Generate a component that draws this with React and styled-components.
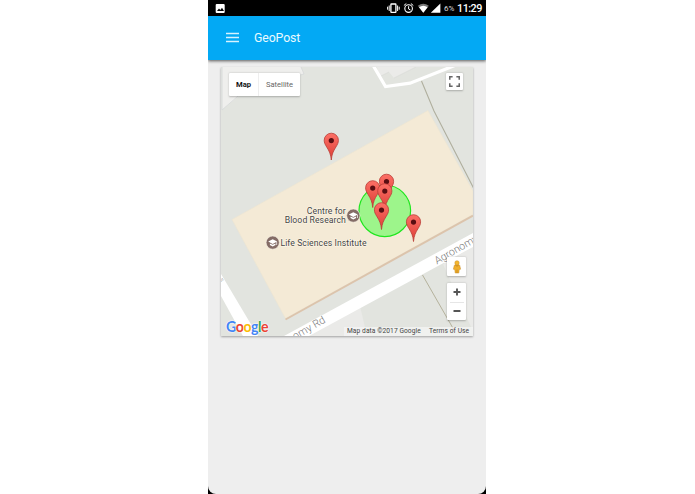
import React from 'react';
import styled, { createGlobalStyle } from 'styled-components';

const Global = createGlobalStyle`
  * { box-sizing: border-box; }
  body { margin: 0; background: #fff; font-family: Roboto, sans-serif; }
`;

const Page = styled.main`
  width: 695px;
  height: 494px;
  padding-left: 208px;
  overflow: hidden;
`;

const Phone = styled.div`
  width: 278px;
  height: 494px;
  background: #000;
`;

const Screen = styled.div`
  height: 478px;
  background: #eee;
  border-radius: 0 0 8px 8px;
  overflow: hidden;
`;

const StatusBar = styled.div`
  height: 16px;
  display: flex;
  align-items: center;
  justify-content: space-between;
  padding: 0 5px 0 7px;
  color: #fff;
`;

const StatusIcons = styled.div`
  display: flex;
  align-items: center;
`;

const Battery = styled.span`
  font-size: 8px;
  line-height: 16px;
  margin-top: 1px;
  color: #ddd;
  width: 11px;
  white-space: nowrap;
`;

const Clock = styled.span`
  font-size: 10.8px;
  font-weight: 500;
  line-height: 16px;
  margin: 2px 0 0 2px;
  width: 24px;
  letter-spacing: -0.5px;
  white-space: nowrap;
`;

const AppBar = styled.header`
  position: relative;
  height: 44px;
  display: flex;
  align-items: center;
  padding: 0 18px 2px;
  gap: 15px;
  background: #03a9f4;
  box-shadow: 0 1px 3px rgba(0, 0, 0, 0.65);
`;

const Title = styled.h1`
  margin: 1px 0 0;
  font-size: 12.3px;
  font-weight: 400;
  letter-spacing: -0.1px;
  line-height: 18px;
  color: #eafaff;
`;

const MapCard = styled.section`
  position: relative;
  width: 252px;
  height: 269px;
  margin: 7px 0 0 13px;
  background: #e2e4df;
  box-shadow: 0 1px 2px rgba(0, 0, 0, 0.32);
`;

const Drawing = styled.svg`
  display: block;
  width: 252px;
  height: 269px;
`;

const Control = styled.div`
  position: absolute;
  display: flex;
  background: #fff;
  border-radius: 1px;
  box-shadow: 0 0.5px 2px rgba(0, 0, 0, 0.25);
`;

const MapTypes = styled(Control)`
  left: 8px;
  top: 6px;
  width: 71px;
  height: 23px;
`;

const TypeButton = styled.button`
  width: ${(p) => p.$width}px;
  height: 23px;
  padding: 0;
  border: 0;
  border-left: ${(p) => (p.$active ? '0' : '1px solid #eee')};
  background: none;
  font: ${(p) => (p.$active ? 700 : 400)} 7.6px Roboto, sans-serif;
  color: ${(p) => (p.$active ? '#111' : '#666')};
`;

const Fullscreen = styled(Control)`
  right: 10px;
  top: 6px;
  width: 17px;
  height: 17px;
  align-items: center;
  justify-content: center;
`;

const StreetView = styled(Control)`
  right: 7px;
  top: 190px;
  width: 19px;
  height: 19px;
  align-items: center;
  justify-content: center;
`;

const Zoom = styled(Control)`
  right: 7px;
  top: 216px;
  width: 19px;
  height: 37px;
  flex-direction: column;
  align-items: center;
`;

const ZoomButton = styled.button`
  width: 14px;
  height: 18.5px;
  padding: 0;
  display: flex;
  align-items: center;
  justify-content: center;
  border: 0;
  border-top: ${(p) => (p.$divided ? '1px solid #e6e6e6' : '0')};
  background: none;
`;

const Credits = styled.div`
  position: absolute;
  right: 0;
  bottom: 0;
  height: 9px;
  display: flex;
  background: rgba(245, 245, 245, 0.72);
  font-size: 6.65px;
  line-height: 8px;
  color: #444;
  white-space: nowrap;
`;

const Credit = styled.span`
  width: ${(p) => p.$width}px;
  padding-left: 3px;
  letter-spacing: 0.07px;
`;

const Logo = styled.div`
  position: absolute;
  left: 5px;
  bottom: 0;
  font-family: Lato, sans-serif;
  font-size: 14.2px;
  font-weight: 700;
  line-height: 18px;
  letter-spacing: -0.5px;
  text-shadow: 0 0 1px #fff, 0 0 1px #fff, 0 0 2px #fff;
`;

const Letter = styled.span`
  color: ${(p) => p.$color};
`;

const markers = [
  [386.5, 201], [372.7, 207.5], [384.8, 210.5], [381.5, 229.5], [413.5, 241.5], [331.3, 160],
];

const logoLetters = [
  ['G', '#4285f4'], ['o', '#ea4335'], ['o', '#fbbc05'],
  ['g', '#4285f4'], ['l', '#34a853'], ['e', '#ea4335'],
];

function Marker({ x, y }) {
  return (
    <g transform={`translate(${x} ${y})`}>
      <path
        d="M0 0C-.5-5.8-2-8.8-4.6-13C-6.3-15.7-7.1-17.4-7.1-19.7A7.1 7.1 0 0 1 7.1-19.7C7.1-17.4 6.3-15.7 4.6-13C2-8.8.5-5.8 0 0Z"
        fill="url(#pin)" stroke="#b93c36" strokeWidth=".8"
      />
      <circle cy="-19.4" r="2.6" fill="#590e12" />
    </g>
  );
}

function School({ x, y }) {
  return (
    <g transform={`translate(${x} ${y})`}>
      <circle r="6.6" fill="#846c66" stroke="#f9f3e8" strokeWidth=".6" />
      <path d="M-4.5-1L0-3.4L4.5-1L0 1.4Z" fill="#fff" />
      <path d="M-2.8.8V2.4L0 3.9L2.8 2.4V.8L0 2.2ZM3.7-.7H4.4V2.3H3.7Z" fill="#fff" />
    </g>
  );
}

function MapDrawing() {
  return (
    <Drawing viewBox="221 67 252 269">
      <defs>
        <linearGradient id="pin" x1="0" y1="0" x2="0" y2="1">
          <stop offset="0" stopColor="#fc7066" />
          <stop offset="1" stopColor="#dd3d36" />
        </linearGradient>
      </defs>
      <path d="M222 67H301L304 74L245 91L222 110Z" fill="#efefed" />
      <path d="M222 67V110L245 90M301 67L304 74L296 76" fill="none" stroke="#d6d8d8" strokeWidth=".8" />
      <path d="M377 67H416L394 78L389 72L379 77Z" fill="#ebebe9" />
      <path d="M394 78L416 67M379 77L389 72" fill="none" stroke="#dadbd8" strokeWidth=".7" />
      <path d="M373.5 66L385.5 86.5L410 83.2L456 65" fill="none" stroke="#fff" strokeWidth="3.2" />
      <path d="M421.5 81L434 111L474 189" fill="none" stroke="#b0af9e" strokeWidth="1.1" />
      <path d="M428 110.5L232 219.5L285.5 318.5L473 214.5V191Z" fill="#f4ead6" stroke="#ede5d3" strokeWidth=".7" />
      <path d="M285.5 319.5L473 215.5" stroke="#dcc4ac" strokeWidth="2" />
      <path d="M303 336L360 306L367 336Z" fill="#eaeae8" />
      <path d="M443 264L473 247V331L466 316Z" fill="#eaeae8" />
      <path d="M221 274L258 336H243L221 296Z" fill="#fff" />
      <path d="M284 336L473 233V247L309 336Z" fill="#fff" />
      <path d="M422.5 275L454 330" stroke="#b5b29c" strokeWidth="1" />
      <g fontFamily="Roboto, sans-serif" fontWeight="300" fill="#777" stroke="#fff" strokeWidth="1.2" paintOrder="stroke" fontSize="10.6">
        <text transform="translate(437 264.5) rotate(-30)">Agronomy</text>
        <text transform="translate(284.6 346) rotate(-30)" textLength="48">onomy Rd</text>
        <text transform="translate(219.5 279.5) rotate(60)" fontSize="6">s</text>
      </g>
      <circle cx="384.8" cy="210.8" r="25.8" fill="#9df58b" stroke="#1ee61e" strokeWidth="1.2" />
      <School x={353.3} y={215.6} />
      <School x={272.7} y={242.6} />
      <g fontFamily="Roboto, sans-serif" fontSize="8.7" fill="#444" stroke="#fff8ea" strokeWidth="1" paintOrder="stroke">
        <text x="306.8" y="214.1" textLength="39">Centre for</text>
        <text x="284.7" y="222.9" textLength="61.2">Blood Research</text>
        <text x="280.5" y="245.6" textLength="86">Life Sciences Institute</text>
      </g>
      {markers.map(([x, y]) => <Marker key={`${x}-${y}`} x={x} y={y} />)}
    </Drawing>
  );
}

export default function App() {
  return (
    <Page>
      <Global />
      <Phone>
        <StatusBar>
          <svg width="11" height="11" viewBox="0 0 11 11">
            <rect x=".7" y="1" width="9" height="9" rx="1" fill="#fff" />
            <path d="M2 8L4 5.5L5.3 7L7 4.7L9 8Z" fill="#000" />
          </svg>
          <StatusIcons>
            <svg width="57" height="16" viewBox="0 0 57 16">
              <g fill="none" stroke="#fff">
                <rect x="3.9" y="4" width="5" height="8.4" rx=".5" strokeWidth="1.3" />
                <path d="M2.2 5.5V11M.6 6.7V9.7M10.6 5.5V11M12.2 6.7V9.7" strokeWidth="1" />
                <circle cx="21.6" cy="8.6" r="3.8" strokeWidth="1.1" />
                <path d="M21.6 6.2V9L23.5 10M16.9 5.5L19.3 3.5M26.3 5.5L23.9 3.5" strokeWidth="1" />
              </g>
              <path d="M30.8 5.7Q36.3 1.8 41.8 5.7L36.3 12.8Z" fill="#777" />
              <path d="M32 7.2Q36.3 4.1 40.6 7.2L36.3 12.8Z" fill="#fff" />
              <path d="M43.8 12.8L53.4 3.4V12.8Z" fill="#fff" />
            </svg>
            <Battery>6%</Battery>
            <Clock>11:29</Clock>
          </StatusIcons>
        </StatusBar>
        <Screen>
          <AppBar>
            <svg width="13" height="11" viewBox="0 0 13 11">
              <path d="M0 1.5H13M0 5.5H13M0 9.5H13" stroke="#d8f3ff" strokeWidth="1.4" />
            </svg>
            <Title>GeoPost</Title>
          </AppBar>
          <MapCard>
            <MapDrawing />
            <MapTypes>
              <TypeButton $active $width={29}>Map</TypeButton>
              <TypeButton $width={42}>Satellite</TypeButton>
            </MapTypes>
            <Fullscreen>
              <svg width="11" height="11" viewBox="0 0 10 10">
                <path d="M.7 3.3V.7H3.3M6.7.7H9.3V3.3M9.3 6.7V9.3H6.7M3.3 9.3H.7V6.7" fill="none" stroke="#666" strokeWidth="1.4" />
              </svg>
            </Fullscreen>
            <StreetView>
              <svg width="10" height="14" viewBox="0 0 10 14">
                <path d="M2.3 5.2Q5 4.2 7.7 5.2L8.6 9.2L7.2 9.5L6.8 13H3.2L2.8 9.5L1.4 9.2Z" fill="#f0af2c" stroke="#c78b24" strokeWidth=".5" />
                <circle cx="5" cy="2.9" r="2.2" fill="#f5b72e" stroke="#c78b24" strokeWidth=".5" />
                <path d="M3.4 5.2L5 6.3L6.6 5.2M5 9.5V13" stroke="#b67a20" strokeWidth=".6" fill="none" />
              </svg>
            </StreetView>
            <Zoom>
              <ZoomButton aria-label="Zoom in">
                <svg width="8" height="8" viewBox="0 0 8 8"><path d="M.5 4H7.5M4 .5V7.5" stroke="#555" strokeWidth="1.9" /></svg>
              </ZoomButton>
              <ZoomButton $divided aria-label="Zoom out">
                <svg width="8" height="8" viewBox="0 0 8 8"><path d="M.5 4H7.5" stroke="#555" strokeWidth="1.9" /></svg>
              </ZoomButton>
            </Zoom>
            <Logo>
              {logoLetters.map(([letter, color], i) => <Letter key={i} $color={color}>{letter}</Letter>)}
            </Logo>
            <Credits>
              <Credit $width={82}>Map data ©2017 Google</Credit>
              <Credit $width={47}>Terms of Use</Credit>
            </Credits>
          </MapCard>
        </Screen>
      </Phone>
    </Page>
  );
}
